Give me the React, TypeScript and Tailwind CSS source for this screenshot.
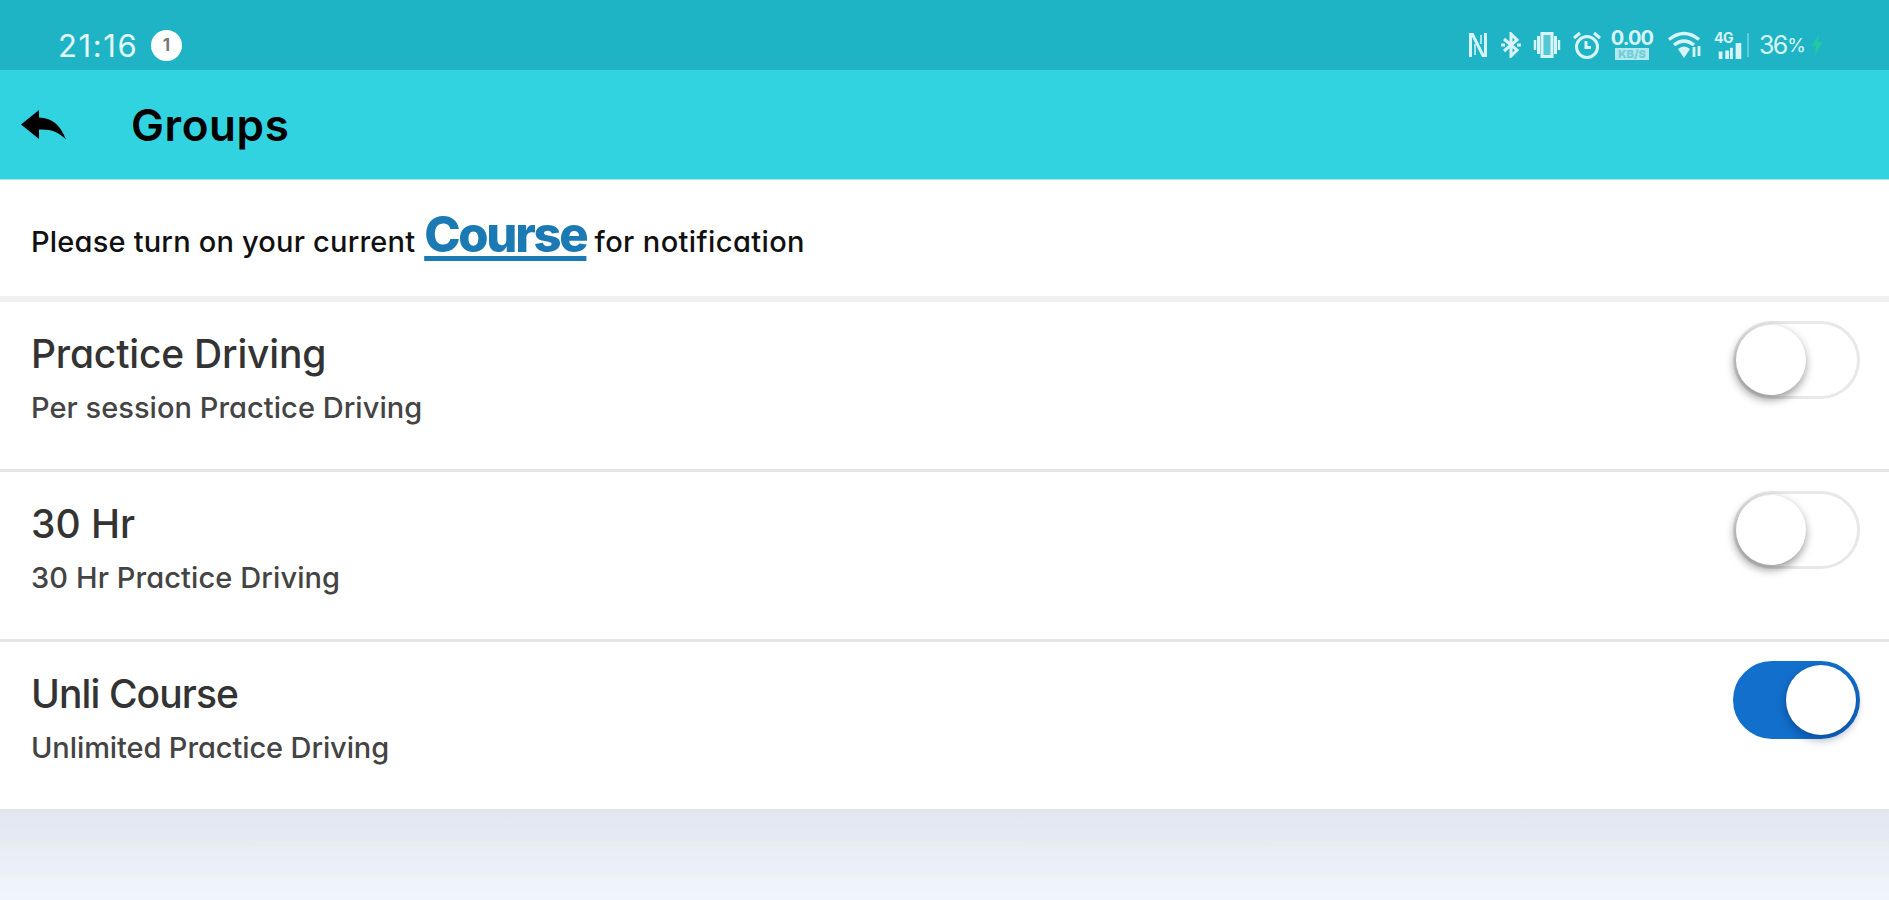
import { useState } from "react";

const groups = [
  { name: "Practice Driving", description: "Per session Practice Driving", nameStyle: "tracking-[-0.2px]", descStyle: "tracking-[0.04px]", on: false },
  { name: "30 Hr", description: "30 Hr Practice Driving", nameStyle: "tracking-[0px]", descStyle: "tracking-[0.1px]", on: false },
  { name: "Unli Course", description: "Unlimited Practice Driving", nameStyle: "tracking-[-0.9px]", descStyle: "tracking-[-0.1px]", on: true },
];

function StatusIcons() {
  return (
    <div className="flex items-center h-[30px] text-[#d8f4f7]">
      <svg className="w-5 h-[26px]" viewBox="0 0 20 26" fill="none" stroke="currentColor" strokeWidth="3">
        <path d="M2.500 25V2.500h2L15 23.500h2.500V1" />
        <path d="M7 12v11M13 3v9" strokeWidth="1.500" />
      </svg>
      <svg className="w-5 h-[26px] ml-[13px]" viewBox="0 0 20 26" fill="none" stroke="currentColor" strokeWidth="3">
        <path d="M3 7l13 11-6 6V2l6 6L3 19" />
        <path d="M0 13h4M16 13h4" />
      </svg>
      <svg className="w-7 h-[28px] ml-[12px]" viewBox="0 0 28 28" fill="none" stroke="currentColor" strokeWidth="3">
        <path d="M9 2.500h10v23H9z" fill="currentColor" fillOpacity="0.3" />
        <path d="M5.500 5v18M22.500 5v18" />
        <path d="M2 9v10M26 9v10" strokeWidth="2.400" />
      </svg>
      <svg className="w-7 h-[28px] ml-[12px]" viewBox="0 0 28 28" fill="none" stroke="currentColor" strokeWidth="3">
        <circle cx="14" cy="16" r="10.500" />
        <path d="M1 7l6-5M27 7l-6-5M13 10v6.500h5" />
      </svg>
      <div className="ml-[9px] w-[44px] flex flex-col items-center">
        <span className="text-[20px] leading-[17px] font-bold tracking-[-0.9px]">0.00</span>
        <span className="mt-px h-[12px] w-[34px] bg-[#b4e8ed] text-center text-[11px] leading-[12px] font-black text-[#6fd0da]">KB/S</span>
      </div>
      <svg className="w-[36px] h-[28px] ml-[13px]" viewBox="0 0 36 28" fill="none" stroke="currentColor" strokeWidth="3.4">
        <path d="M2 8.500q15-12 30 0M7 14q10-8 20 0" />
        <path d="M11 18q6-5 12 0l-6 9z" fill="currentColor" stroke="none" />
        <path d="M27 16v10M32 15v10" strokeWidth="2.800" />
      </svg>
      <div className="ml-[11px] w-[32px] h-[28px] flex flex-col">
        <span className="text-[14px] leading-[13px] font-bold tracking-[-0.5px]">4G</span>
        <svg className="w-[32px] h-[17px] -mt-px" viewBox="0 0 32 17" fill="currentColor">
          <path d="M4 9h4v8H4zM11 8h4v9h-4zM16 5h3v12h-3zM22 0h6v17h-6z" />
        </svg>
      </div>
      <div className="ml-[1px] w-[2px] h-[24px] bg-[#5fcbd6]" />
      <span className="ml-[10px] w-[48px] text-[25px] leading-[28px] pt-px tracking-[-1.8px] whitespace-nowrap">
        36<span className="ml-px align-[2px] text-[19px]">%</span>
      </span>
      <svg className="w-[10px] h-[22px] ml-[5px]" viewBox="0 0 10 22">
        <path d="M7 0L0 12h4l-1 10 7-14H6z" fill="#22c9a0" />
      </svg>
    </div>
  );
}

function Toggle({ on, onClick }: { on: boolean; onClick: () => void }) {
  return (
    <button
      role="switch"
      aria-checked={on}
      onClick={onClick}
      className={`flex items-center w-[127px] h-[78px] rounded-full border-[3px] ${
        on ? "justify-end border-[#1270cc] bg-[#1270cc] pr-px" : "border-[#e8e8e8] bg-white"
      }`}
    >
      <span
        className={`size-[70px] rounded-full bg-white ${
          on ? "shadow-[0_4px_8px_1px_rgba(0,20,80,0.35)]" : "shadow-[-1px_4px_9px_1px_rgba(0,0,0,0.38)]"
        }`}
      />
    </button>
  );
}

export default function App() {
  const [enabled, setEnabled] = useState(groups.map((g) => g.on));

  const toggle = (index: number) => {
    setEnabled(enabled.map((value, i) => (i === index ? !value : value)));
  };

  return (
    <div className="w-full h-[900px] flex flex-col overflow-hidden bg-white font-['Inter',sans-serif] [font-feature-settings:'cv11']">
      <div className="h-[70px] shrink-0 flex items-start justify-between bg-[#1fb4c5] pl-[58px] pr-[67px] pt-[30px]">
        <div className="flex items-center h-[31px] text-[#e2f8fa]">
          <span className="w-[93px] text-[31px] leading-[31px] tracking-[1.6px]">21:16</span>
          <span className="size-[31px] rounded-full bg-white text-center text-[17px] leading-[31px] font-bold text-[#777]">1</span>
        </div>
        <StatusIcons />
      </div>

      <header className="h-[110px] shrink-0 flex items-center bg-[#32d3e1] border-b border-[#a8e6f0] pl-[21px]">
        <svg className="w-[46px] h-[32px] text-black" viewBox="0 0 46 32" fill="currentColor">
          <path d="M0 15.500L18 1v7.500c13 .5 21 7 27 22-8-8-15-10.500-27-10V30z" />
        </svg>
        <h1 className="ml-[64px] pt-px text-[44px] font-semibold tracking-[0.6px] text-black">Groups</h1>
      </header>

      <div className="h-[122px] shrink-0 border-b-[6px] border-[#f1f1f1] pl-[31px] pt-[25px] leading-[60px] text-[29px] font-medium text-[#111] whitespace-nowrap">
        <span className="tracking-[0.2px]">Please turn on your current </span>
        <a className="ml-[1px] text-[49px] font-extrabold tracking-[-2.3px] text-[#1b7ab3] underline decoration-[5px] underline-offset-[4px] [text-decoration-skip-ink:none]">Course</a>
        <span className="tracking-[0.4px]"> for notification</span>
      </div>

      {groups.map((group, index) => (
        <div key={group.name} className="h-[170px] shrink-0 flex items-start justify-between border-b-[3px] border-[#e5e5e5] pl-[31px] pr-[29px]">
          <div className="pt-[28px]">
            <h2 className={`text-[39px] leading-[48px] font-medium text-[#333] ${group.nameStyle}`}>{group.name}</h2>
            <p className={`mt-[12px] text-[29px] leading-[36px] font-medium text-[#444] ${group.descStyle}`}>{group.description}</p>
          </div>
          <div className="pt-[19px]">
            <Toggle on={enabled[index]} onClick={() => toggle(index)} />
          </div>
        </div>
      ))}

      <div className="grow bg-[linear-gradient(#e2e7f2_0%,#e4e9f2_25%,#e6ecf0_38%,#e9eef7_44%,#ebeff8_68%,#eef4f8_76%,#f0f4fd_100%)]" />
    </div>
  );
}
